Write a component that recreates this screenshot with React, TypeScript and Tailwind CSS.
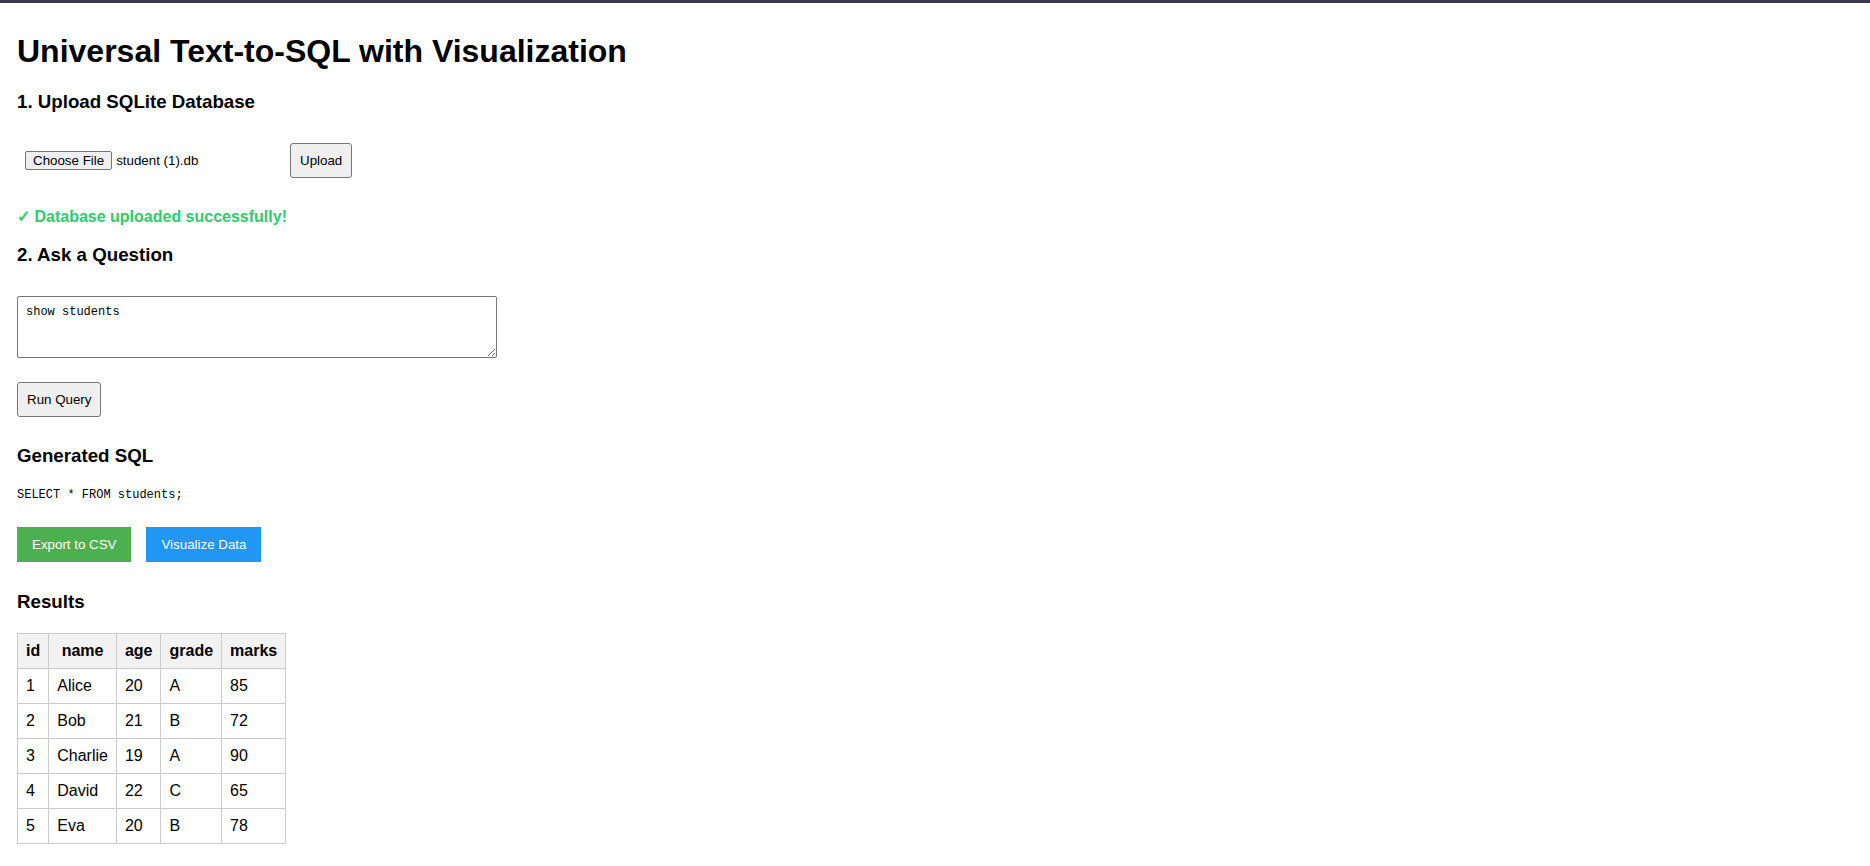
const students = [
  {id: 1, name: "Alice", age: 20, grade: "A", marks: 85},
  {id: 2, name: "Bob", age: 21, grade: "B", marks: 72},
  {id: 3, name: "Charlie", age: 19, grade: "A", marks: 90},
  {id: 4, name: "David", age: 22, grade: "C", marks: 65},
  {id: 5, name: "Eva", age: 20, grade: "B", marks: 78},
]

const columns = ["id", "name", "age", "grade", "marks"] as const

const grayBtn =
  "h-[35px] px-[9px] border border-[#767676] rounded-[3px] bg-[#efefef] text-[13.33px] leading-[normal] text-black"

export default function App() {
  return (
    <div className="min-h-screen bg-white border-t-[3px] border-[#3c3a4a] font-['Liberation_Sans',Arial,sans-serif] text-black">
      <div className="px-[17px] pt-[30px] pb-6 flex flex-col items-start">
        <h1 className="text-[32px] font-bold leading-[37px]">Universal Text-to-SQL with Visualization</h1>

        <h3 className="mt-[21px] text-[18.72px] font-bold leading-[21.5px]">1. Upload SQLite Database</h3>
        <div className="mt-[30px] flex items-center h-[35px]">
          <div className="w-[273px] pl-[8px] flex items-center">
            <span className="px-[7px] py-[1px] border border-[#767676] rounded-[2px] bg-[#efefef] text-[13.33px] leading-[normal]">
              Choose File
            </span>
            <span className="ml-[4px] text-[13.33px] leading-[normal]">student (1).db</span>
          </div>
          <button className={grayBtn}>Upload</button>
        </div>

        <p className="mt-[30px] text-[16px] font-bold leading-[18.5px] text-[#2ecc71]">✓ Database uploaded successfully!</p>

        <h3 className="mt-[18px] text-[18.72px] font-bold leading-[21.5px]">2. Ask a Question</h3>
        <textarea
          defaultValue="show students"
          className="mt-[30px] w-[480px] h-[62px] p-[8px] border border-[#767676] rounded-[2px] font-['Liberation_Mono',monospace] text-[12px] leading-[15px] text-black"
        />
        <button className={`mt-[24px] ${grayBtn}`}>Run Query</button>

        <h3 className="mt-[28px] text-[18.72px] font-bold leading-[21.5px]">Generated SQL</h3>
        <pre className="mt-[22px] font-['Liberation_Mono',monospace] text-[12px] leading-[15px]">SELECT * FROM students;</pre>

        <div className="mt-[24px] flex gap-[15px]">
          <button className="h-[35px] px-[15px] bg-[#4caf50] text-white text-[13.33px] leading-[normal]">Export to CSV</button>
          <button className="h-[35px] px-[15px] bg-[#2196f3] text-white text-[13.33px] leading-[normal]">Visualize Data</button>
        </div>

        <h3 className="mt-[29px] text-[18.72px] font-bold leading-[21.5px]">Results</h3>
        <table className="mt-[20px] border-collapse text-[16px] leading-[18px]">
          <thead>
            <tr>
              {columns.map((c) => (
                <th key={c} className="border border-[#cccccc] bg-[#f2f2f2] p-[8px] font-bold text-center">
                  {c}
                </th>
              ))}
            </tr>
          </thead>
          <tbody>
            {students.map((s) => (
              <tr key={s.id}>
                {columns.map((c) => (
                  <td key={c} className="border border-[#cccccc] p-[8px] text-left">
                    {s[c]}
                  </td>
                ))}
              </tr>
            ))}
          </tbody>
        </table>
      </div>
    </div>
  )
}
